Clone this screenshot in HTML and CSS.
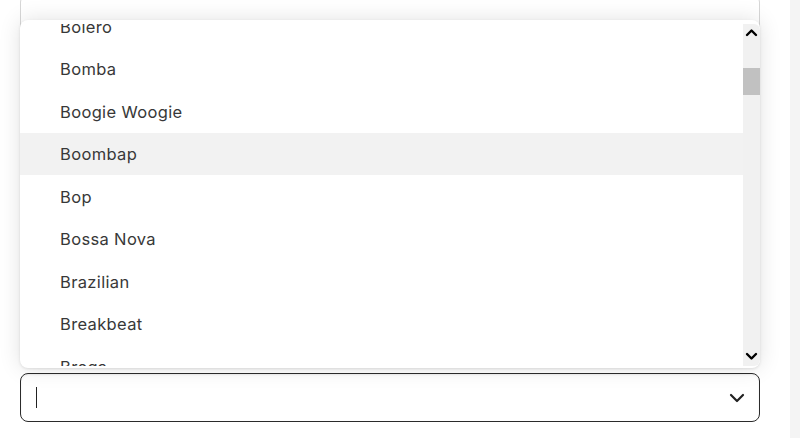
FILE: index.html
```html
<!DOCTYPE html>
<html lang="en">
<head>
<meta charset="utf-8">
<title>Genre select</title>
<link rel="stylesheet" href="styles.css">
</head>
<body>
<div class="page">
  <main class="main">
    <div class="field-stack">
      <div class="prev-field"></div>
      <div class="select-input">
        <span class="caret"></span>
        <svg class="chevron" width="16" height="10" viewBox="0 0 16 10"><path d="M2 2 L8 8 L14 2" fill="none" stroke="#222" stroke-width="2.2" stroke-linecap="round" stroke-linejoin="round"/></svg>
      </div>
      <div class="popup">
        <div class="list">
          <ul class="options">
            <li class="option">Bolero</li>
            <li class="option">Bomba</li>
            <li class="option">Boogie Woogie</li>
            <li class="option active">Boombap</li>
            <li class="option">Bop</li>
            <li class="option">Bossa Nova</li>
            <li class="option">Brazilian</li>
            <li class="option">Breakbeat</li>
            <li class="option">Brega</li>
          </ul>
        </div>
        <div class="scrollbar">
          <svg class="sb-arrow up" width="17" height="12" viewBox="0 0 17 12"><path d="M4 8 L8.5 3.5 L13 8" fill="none" stroke="#000" stroke-width="2.4" stroke-linecap="round" stroke-linejoin="round"/></svg>
          <div class="thumb"></div>
          <div class="sb-spacer"></div>
          <svg class="sb-arrow down" width="17" height="12" viewBox="0 0 17 12"><path d="M4 4 L8.5 8.5 L13 4" fill="none" stroke="#000" stroke-width="2.4" stroke-linecap="round" stroke-linejoin="round"/></svg>
        </div>
      </div>
    </div>
  </main>
  <aside class="side"></aside>
</div>
</body>
</html>
```

FILE: styles.css
```css
html, body {
  margin: 0;
  padding: 0;
  background: #ffffff;
}
body {
  font-family: Inter, "Noto Sans", sans-serif;
  color: #333333;
}
.page {
  display: flex;
  width: 800px;
  height: 442px;
  overflow: hidden;
}
.main {
  width: 790px;
  height: 442px;
  background: #ffffff;
}
.side {
  width: 10px;
  height: 438px;
  background: #f4f4f4;
}
.field-stack {
  position: relative;
  padding: 0 30px 0 20px;
  display: flex;
  flex-direction: column;
  gap: 10px;
}
.prev-field {
  margin-top: -6px;
  height: 367px;
  border: 1px solid #d6d6d6;
  border-radius: 8px;
  background: #fff;
}
.select-input {
  height: 47px;
  border: 1px solid #2b2b2b;
  border-radius: 8px;
  display: flex;
  align-items: center;
  justify-content: space-between;
  padding: 0 14px 0 15px;
  box-shadow: inset 0 1px 2px rgba(0,0,0,0.08);
}
.caret {
  width: 1px;
  height: 21px;
  background: #222;
}
.chevron {
  display: block;
}
.popup {
  position: absolute;
  left: 20px;
  top: 20px;
  width: 740px;
  height: 348px;
  box-sizing: border-box;
  padding: 4px 0 2px;
  background: #fff;
  border-radius: 8px;
  box-shadow: 0 0 22px rgba(0,0,0,0.12), 0 1px 3px rgba(0,0,0,0.10);
  display: flex;
  overflow: hidden;
}
.list {
  flex: 1;
  overflow: hidden;
}
.options {
  list-style: none;
  margin: -18.75px 0 0 0;
  padding: 0;
}
.option {
  height: 42.5px;
  display: flex;
  align-items: center;
  padding-left: 40px;
  font-size: 16.5px;
  letter-spacing: 0.35px;
  color: #383838;
}
.option.active {
  background: #f2f2f2;
}
.scrollbar {
  width: 17px;
  background: #f1f1f1;
  display: flex;
  flex-direction: column;
  border-top-right-radius: 6px;
  border-bottom-right-radius: 6px;
}
.sb-arrow {
  display: block;
}
.sb-arrow.up {
  margin-top: 3px;
}
.sb-arrow.down {
  margin-bottom: 4px;
}
.thumb {
  margin-top: 29px;
  height: 27px;
  background: #c1c1c1;
}
.sb-spacer {
  flex: 1;
}
```
